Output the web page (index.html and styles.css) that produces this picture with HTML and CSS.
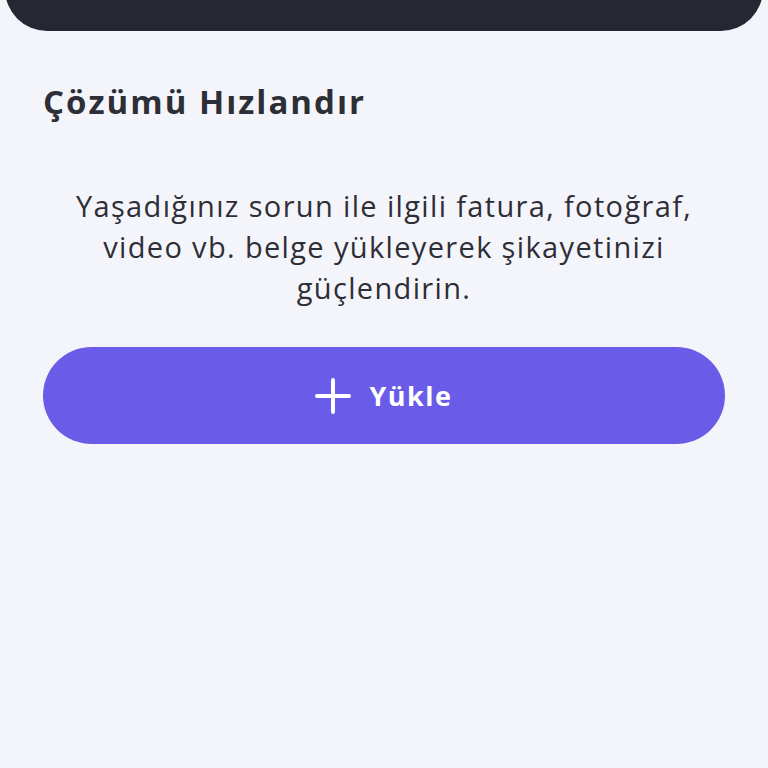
FILE: index.html
```html
<!DOCTYPE html>
<html lang="tr">
<head>
<meta charset="utf-8">
<link rel="stylesheet" href="styles.css">
</head>
<body>
<div class="header"></div>
<main class="content">
  <h2 class="title">Çözümü Hızlandır</h2>
  <p class="desc">Yaşadığınız sorun ile ilgili fatura, fotoğraf, video vb. belge yükleyerek şikayetinizi güçlendirin.</p>
  <button class="upload">
    <svg class="plus" width="36" height="36" viewBox="0 0 36 36"><path d="M18 2V34M2 18H34" stroke="#fff" stroke-width="4" stroke-linecap="round"/></svg>
    <span>Yükle</span>
  </button>
</main>
</body>
</html>
```
FILE: styles.css
```css
html, body {
  margin: 0;
  padding: 0;
  background: #f4f5fa;
  font-family: "Open Sans", sans-serif;
  color: #2e2e36;
}
.header {
  height: 80px;
  margin: -49px 5px 0;
  background: #272733;
  border-radius: 0 0 42px 42px;
}
.content {
  padding: 0 43px;
}
.title {
  margin: 50px 0 0;
  font-size: 33px;
  font-weight: 700;
  line-height: 42px;
  letter-spacing: 2px;
}
.desc {
  margin: 62px 0 0;
  text-align: center;
  font-size: 29px;
  line-height: 41px;
  font-weight: 400;
  letter-spacing: 1.35px;
}
.upload {
  margin-top: 39px;
  width: 100%;
  height: 97px;
  border: none;
  border-radius: 49px;
  background: #6a5ce8;
  color: #fff;
  font-family: inherit;
  font-size: 27px;
  font-weight: 700;
  display: flex;
  align-items: center;
  justify-content: center;
  gap: 18px;
  letter-spacing: 1.5px;
}
.plus {
  display: block;
}
```
